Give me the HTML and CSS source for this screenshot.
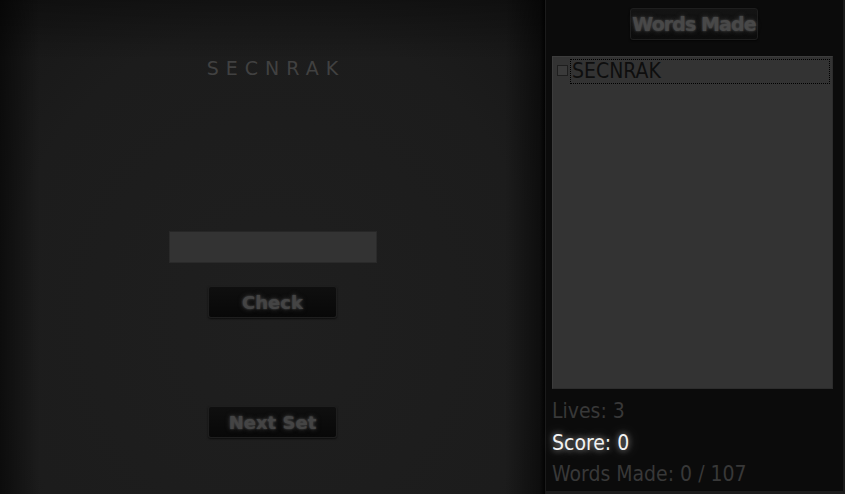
FILE: index.html
```html
<!DOCTYPE html>
<html>
<head>
<meta charset="utf-8">
<link rel="stylesheet" href="styles.css">
</head>
<body>
<div class="app">
  <div class="game">
    <div class="letters">SECNRAK</div>
    <input class="guess" type="text">
    <button class="btn check">Check</button>
    <button class="btn next">Next Set</button>
  </div>
  <div class="side">
    <div class="side-head"><button class="btn words">Words Made</button></div>
    <div class="list">
      <div class="item"><span class="box"></span><span class="word">SECNRAK</span></div>
    </div>
    <div class="stats">
      <div class="stat">Lives: 3</div>
      <div class="stat score">Score: 0</div>
      <div class="stat">Words Made: 0 / 107</div>
    </div>
  </div>
</div>
</body>
</html>
```
FILE: styles.css
```css
html, body { margin: 0; padding: 0; }
body {
  width: 845px; height: 494px; overflow: hidden;
  background: #0a0a0a;
  font-family: "DejaVu Sans", Verdana, sans-serif;
}
.app { display: flex; width: 845px; height: 494px; }
.game {
  width: 545px; height: 494px; box-sizing: border-box;
  display: flex; flex-direction: column; align-items: center;
  background:
    linear-gradient(to right, rgba(0,0,0,0.55) 0px, rgba(0,0,0,0) 40px, rgba(0,0,0,0) 505px, rgba(0,0,0,0.5) 540px, rgba(0,0,0,0.9) 545px),
    linear-gradient(to bottom, rgba(0,0,0,0.35) 0px, rgba(0,0,0,0) 60px),
    radial-gradient(ellipse 90% 110% at 50% 65%, #1f1f1f 0%, #1c1c1c 55%, #121212 100%);
}
.letters {
  margin-top: 55px; padding-left: 7px;
  font-family: "DejaVu Sans", sans-serif;
  font-size: 19px; letter-spacing: 7px; color: #414141;
  line-height: 26px;
}
.guess {
  margin-top: 150px; width: 208px; height: 32px; box-sizing: border-box;
  background: #333; border: 1px solid #2a2a2a; border-top-color: #262626;
  outline: none; padding: 0;
}
.btn {
  font-family: "DejaVu Sans", Verdana, sans-serif; font-weight: bold;
  font-size: 18px; color: #444;
  background: linear-gradient(#0f0f0f, #080808);
  border: 1px solid #1e1e1e; border-radius: 3px;
  text-shadow: 0 0 2px #4a4a4a, 0 0 5px #3a3a3a;
  box-shadow: 0 1px 2px rgba(0,0,0,0.6);
  padding: 0; cursor: pointer; white-space: nowrap;
}
.check { margin-top: 23px; width: 129px; height: 32px; }
.next { margin-top: 88px; width: 129px; height: 32px; }
.side {
  width: 300px; height: 494px; box-sizing: border-box;
  background: #0b0b0b;
  border-left: 1px solid #1b1b1b; border-right: 2px solid #1b1b1b; border-bottom: 3px solid #1c1c1c;
  display: flex; flex-direction: column;
  padding: 0 11px 0 6px;
}
.side-head { display: flex; justify-content: center; padding-top: 8px; height: 56px; box-sizing: border-box; margin-left: 4px; }
.words { height: 32px; padding: 0 1px; font-size: 19px; letter-spacing: -0.9px; color: #484848; background: linear-gradient(#141414, #0c0c0c); }
.list {
  width: 281px; height: 333px; box-sizing: border-box;
  background: #333; border: 1px solid #3c3c3c; border-right-color: #2c2c2c; border-bottom-color: #2c2c2c;
  padding: 2px 2px 0 4px;
}
.item { display: flex; align-items: center; height: 25px; }
.box {
  width: 9px; height: 9px; border: 1px solid #1e1e1e; background: #3a3a3a;
  margin-right: 2px; align-self: flex-start; margin-top: 6px;
}
.word {
  flex: 1; height: 25px; box-sizing: border-box;
  border: 1px dotted #000; padding-left: 1px;
  font-family: "DejaVu Sans Condensed", "DejaVu Sans", sans-serif;
  font-size: 21px; line-height: 23px; color: #0e0e0e;
}
.stats { padding-top: 7px; }
.stat {
  font-family: "DejaVu Sans Condensed", "DejaVu Sans", sans-serif;
  font-size: 21px; line-height: 31.5px; color: #383838;
}
.score { color: #f2f2f2; text-shadow: 0 0 6px rgba(255,255,255,0.6), 0 0 16px rgba(255,255,255,0.3); }
```
